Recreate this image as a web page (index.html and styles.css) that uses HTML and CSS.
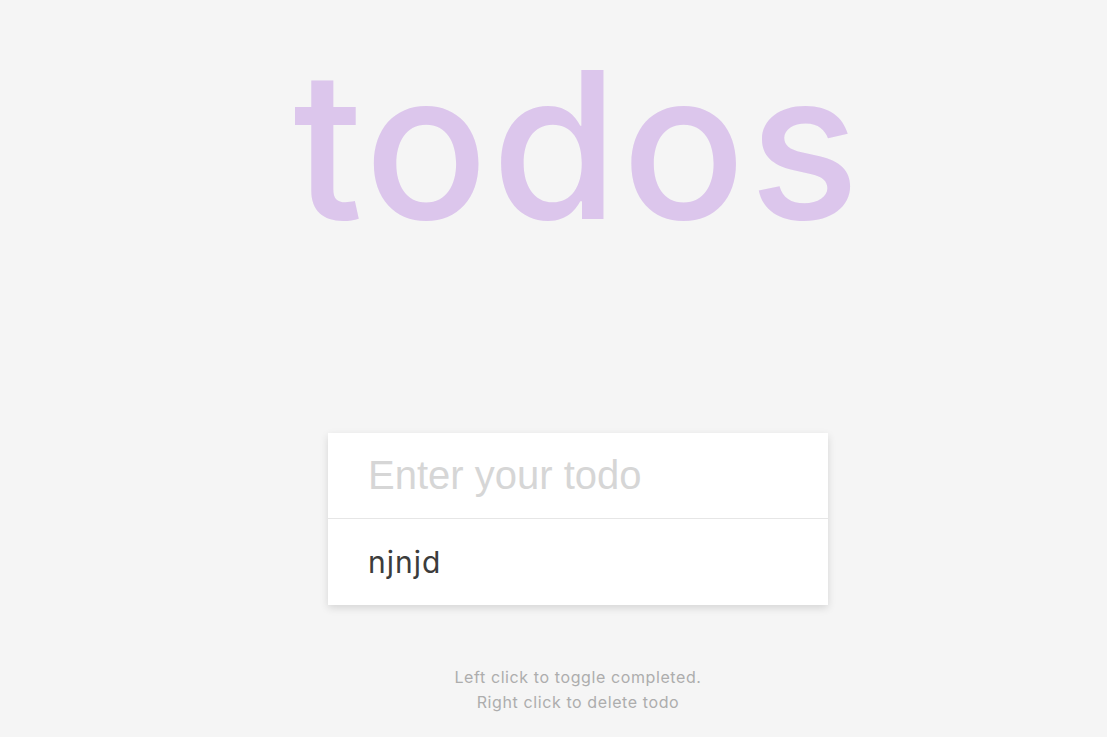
FILE: index.html
```html
<!DOCTYPE html>
<html lang="en">
<head>
<meta charset="utf-8">
<title>todos</title>
<link rel="stylesheet" href="styles.css">
</head>
<body>
<main class="app">
  <h1 class="title">todos</h1>
  <div class="card">
    <input class="entry" type="text" placeholder="Enter your todo">
    <ul class="list">
      <li class="item">njnjd</li>
    </ul>
  </div>
  <p class="hint">Left click to toggle completed.<br>Right click to delete todo</p>
</main>
</body>
</html>
```
FILE: styles.css
```css
html, body {
  margin: 0;
  padding: 0;
  background: #f5f5f5;
}
.app {
  display: flex;
  flex-direction: column;
  align-items: center;
  padding-left: 49px;
  font-family: "Inter", "Noto Sans", sans-serif;
}
.title {
  margin: 42px 0 0 0;
  font-size: 205px;
  line-height: 1;
  font-weight: 500;
  color: #dcc6ec;
  letter-spacing: 3.5px;
  height: 190px;
}
.card {
  margin-top: 201px;
  width: 500px;
  background: #fff;
  box-shadow: 0 3px 8px rgba(0, 0, 0, 0.13);
}
.entry {
  display: block;
  box-sizing: border-box;
  width: 100%;
  height: 86px;
  border: none;
  border-bottom: 1px solid #e6e6e6;
  padding: 0 40px;
  font-family: "Liberation Sans", Arial, sans-serif;
  font-size: 40px;
  outline: none;
  background: #fff;
  color: #4a4a4a;
}
.entry::placeholder {
  color: #d6d6d6;
}
.list {
  list-style: none;
  margin: 0;
  padding: 0;
}
.item {
  height: 86px;
  display: flex;
  align-items: center;
  padding: 0 40px;
  font-size: 30px;
  letter-spacing: 1px;
  color: #3c3c3c;
}
.hint {
  margin: 60px 0 0 0;
  text-align: center;
  font-size: 16px;
  letter-spacing: 0.6px;
  line-height: 25px;
  color: #adadad;
}
```
